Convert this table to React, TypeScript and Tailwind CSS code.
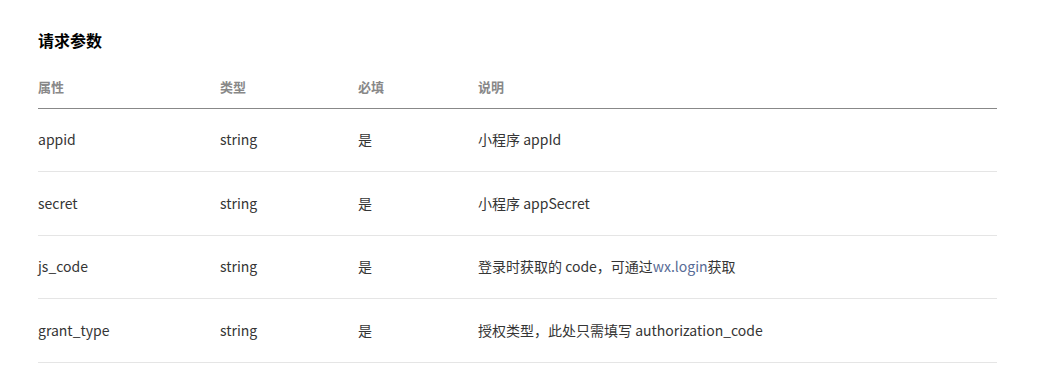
const rows = [
  { name: "appid", type: "string", required: "是", desc: <>小程序 appId</> },
  { name: "secret", type: "string", required: "是", desc: <>小程序 appSecret</> },
  {
    name: "js_code",
    type: "string",
    required: "是",
    desc: (
      <>
        登录时获取的 code，可通过<span className="text-[#576b95]">wx.login</span>获取
      </>
    ),
  },
  { name: "grant_type", type: "string", required: "是", desc: <>授权类型，此处只需填写 authorization_code</> },
];

export default function App() {
  return (
    <div
      className="h-[380px] w-[1050px] bg-white pl-[38px] pt-[28px] text-[#353535]"
      style={{ fontFamily: '"Microsoft YaHei", "Noto Sans CJK SC", "Noto Sans", sans-serif' }}
    >
      <h3 className="h-[24px] text-[16px] leading-[24px] font-bold text-[#000]">请求参数</h3>

      <table className="mt-[14px] w-[959px] table-fixed border-collapse text-left">
        <colgroup>
          <col className="w-[182px]" />
          <col className="w-[138px]" />
          <col className="w-[120px]" />
          <col />
        </colgroup>
        <thead>
          <tr className="h-[42px] border-b border-[#888]">
            <th className="p-0 text-[13px] font-bold text-[#888]">属性</th>
            <th className="p-0 text-[13px] font-bold text-[#888]">类型</th>
            <th className="p-0 text-[13px] font-bold text-[#888]">必填</th>
            <th className="p-0 text-[13px] font-bold text-[#888]">说明</th>
          </tr>
        </thead>
        <tbody>
          {rows.map((r) => (
            <tr key={r.name} className="h-[63.5px] border-b border-[#e5e5e5] text-[14px]">
              <td className="p-0">{r.name}</td>
              <td className="p-0">{r.type}</td>
              <td className="p-0">{r.required}</td>
              <td className="p-0">{r.desc}</td>
            </tr>
          ))}
        </tbody>
      </table>
    </div>
  );
}
